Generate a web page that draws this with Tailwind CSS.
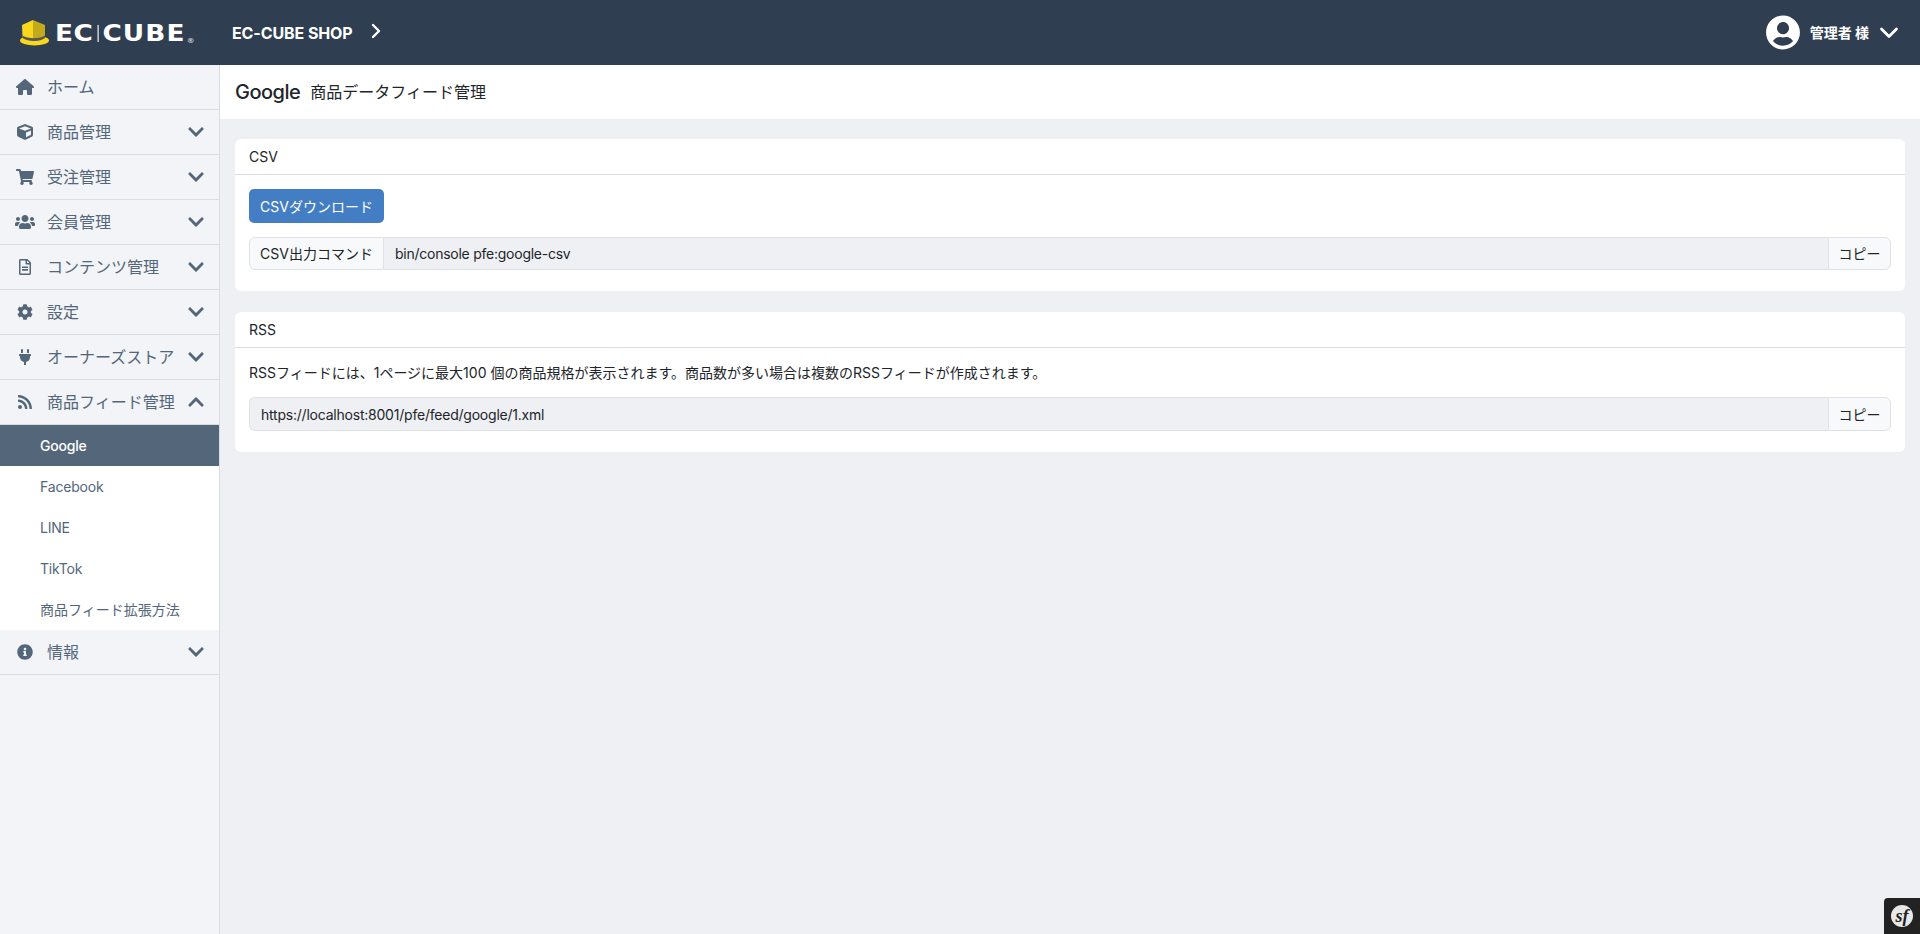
<!DOCTYPE html>
<html lang="ja">
<head>
<meta charset="utf-8">
<title>EC-CUBE</title>
<script src="https://cdn.jsdelivr.net/npm/@tailwindcss/browser@4"></script>
</head>
<body class="h-[934px] overflow-hidden bg-[#eff0f4] font-['Inter','Noto_Sans_CJK_JP',sans-serif] text-[14px] text-[#212529]">
<header class="flex h-[65px] items-center bg-[#2f3e51] text-white">
  <div class="flex w-[232px] shrink-0 items-center pl-[20px]">
    <svg class="mt-[1px] h-[26px] w-[30px] shrink-0" viewBox="0 0 30 26">
      <ellipse cx="14.5" cy="20.5" rx="14.5" ry="5" fill="#f9d71c"/>
      <path d="M2 5 L13 0 L13 21 C8 21 4 20 2.500 17 Z" fill="#f9d71c"/>
      <path d="M13 0 L25 5 L25 17 C23 20 18 21 13 21 Z" fill="#c3a91c"/>
      <path d="M2.500 15.500 C8 19 20 19 25 15.500 L25 18 C20 22 8 22 2.500 18 Z" fill="#56565a"/>
    </svg>
    <div class="mt-[2px] ml-[5px] flex origin-left scale-x-[1.12] items-center font-['DejaVu_Sans',sans-serif] text-[23.500px] leading-none font-bold tracking-[0.500px] whitespace-nowrap">
      <span>EC</span><span class="mx-[3.500px] h-[17px] w-px bg-white"></span><span class="tracking-[1px]">CUBE</span><span class="ml-[1px] self-end text-[7px] tracking-normal text-[#c9ccd1]">®</span>
    </div>
  </div>
  <span class="text-[16px] font-bold tracking-[-0.100px] whitespace-nowrap">EC-CUBE SHOP</span>
  <svg class="mt-[-3px] ml-[18px] h-[16px] w-[10px]" viewBox="0 0 10 16" fill="none" stroke="white" stroke-width="2.400" stroke-linecap="round" stroke-linejoin="round"><path d="M2 2 L8 8 L2 14"/></svg>
  <div class="ml-auto flex items-center pr-[21px]">
    <svg class="h-[35px] w-[34px] fill-white" viewBox="0 0 496 512"><path d="M248 8C111 8 0 119 0 256s111 248 248 248 248-111 248-248S385 8 248 8zm0 96c48.600 0 88 39.400 88 88s-39.400 88-88 88-88-39.400-88-88 39.400-88 88-88zm0 344c-58.700 0-111.300-26.600-146.500-68.200 18.800-35.400 55.600-59.800 98.500-59.800 2.400 0 4.800.4 7.100 1.100 13 4.200 26.600 6.900 40.900 6.900 14.300 0 28-2.700 40.900-6.900 2.300-.7 4.700-1.100 7.100-1.100 42.900 0 79.700 24.400 98.500 59.800C359.300 421.400 306.700 448 248 448z"/></svg>
    <span class="ml-[10px] text-[14px] font-bold whitespace-nowrap">管理者 様</span>
    <svg class="ml-[10px] h-[14px] w-[20px]" viewBox="0 0 20 14" fill="none" stroke="white" stroke-width="2.800" stroke-linecap="round" stroke-linejoin="round"><path d="M2.500 3 L10 10.500 L17.500 3"/></svg>
  </div>
</header>

<div class="flex h-[869px]">
  <nav class="w-[220px] shrink-0 border-r border-[#d9dce3] bg-[#f2f4f7] text-[16px] text-[#54677a]">
    <a class="flex h-[45px] items-center border-b border-[#d9dce3]">
      <span class="flex w-[47px] justify-center pl-[3px]"><svg class="h-[16px] w-[18px] fill-[#54677a]" viewBox="0 0 576 512"><path d="M575.800 255.500c0 18-15 32.100-32 32.100h-32l.7 160.200c0 2.700-.2 5.400-.5 8.100V472c0 22.100-17.900 40-40 40H456c-1.100 0-2.200 0-3.300-.1c-1.400 .1-2.800 .1-4.200 .1H416 392c-22.100 0-40-17.900-40-40V448 384c0-17.700-14.300-32-32-32H256c-17.700 0-32 14.300-32 32v64 24c0 22.100-17.900 40-40 40H160 128.100c-1.500 0-3-.1-4.500-.2c-1.200 .1-2.400 .2-3.600 .2H104c-22.100 0-40-17.900-40-40V360c0-.9 0-1.900 .1-2.800V287.600H32c-18 0-32-14-32-32.100c0-9 3-17 10-24L266.400 8c7-7 15-8 22-8s15 2 21 7L564.800 231.500c8 7 12 15 11 24z"/></svg></span>
      <span>ホーム</span>
    </a>
    <a class="flex h-[45px] items-center border-b border-[#d9dce3]">
      <span class="flex w-[47px] justify-center pl-[3px]"><svg class="h-[16px] w-[16px] fill-[#54677a]" viewBox="0 0 512 512"><path d="M239.100 6.300l-208 78c-18.700 7-31.100 25-31.100 45v225.100c0 18.200 10.300 34.800 26.500 42.900l208 104c13.500 6.800 29.400 6.800 42.900 0l208-104c16.300-8.100 26.500-24.800 26.500-42.900V129.300c0-20-12.400-37.900-31.100-44.900l-208-78C262 2.200 250 2.200 239.100 6.300zM256 68.400l192 72v1.100l-192 78-192-78v-1.100l192-72zm32 356V275.500l160-65v133.900l-160 80z"/></svg></span>
      <span>商品管理</span>
      <svg class="mr-[15px] ml-auto h-[18px] w-[16px] fill-[#54677a]" viewBox="0 0 448 512"><path d="M207.029 381.476L12.686 187.132c-9.373-9.373-9.373-24.569 0-33.941l22.667-22.667c9.357-9.357 24.522-9.375 33.901-.04L224 284.505l154.745-154.021c9.379-9.335 24.544-9.317 33.901.04l22.667 22.667c9.373 9.373 9.373 24.569 0 33.941L240.971 381.476c-9.373 9.372-24.569 9.372-33.942 0z"/></svg>
    </a>
    <a class="flex h-[45px] items-center border-b border-[#d9dce3]">
      <span class="flex w-[47px] justify-center pl-[3px]"><svg class="h-[16px] w-[18px] fill-[#54677a]" viewBox="0 0 576 512"><path d="M528.120 301.319l47.273-208C578.806 78.301 567.391 64 551.990 64H159.208l-9.166-44.810C147.758 8.021 137.930 0 126.529 0H24C10.745 0 0 10.745 0 24v16c0 13.255 10.745 24 24 24h69.883l70.248 343.435C147.325 417.100 136 435.222 136 456c0 30.928 25.072 56 56 56s56-25.072 56-56c0-15.674-6.447-29.835-16.824-40h209.647C430.447 426.165 424 440.326 424 456c0 30.928 25.072 56 56 56s56-25.072 56-56c0-22.172-12.888-41.332-31.579-50.405l5.517-24.276c3.413-15.018-8.002-29.319-23.403-29.319H218.117l-6.545-32h293.145c11.206 0 20.920-7.754 23.403-18.681z"/></svg></span>
      <span>受注管理</span>
      <svg class="mr-[15px] ml-auto h-[18px] w-[16px] fill-[#54677a]" viewBox="0 0 448 512"><path d="M207.029 381.476L12.686 187.132c-9.373-9.373-9.373-24.569 0-33.941l22.667-22.667c9.357-9.357 24.522-9.375 33.901-.04L224 284.505l154.745-154.021c9.379-9.335 24.544-9.317 33.901.04l22.667 22.667c9.373 9.373 9.373 24.569 0 33.941L240.971 381.476c-9.373 9.372-24.569 9.372-33.942 0z"/></svg>
    </a>
    <a class="flex h-[45px] items-center border-b border-[#d9dce3]">
      <span class="flex w-[47px] justify-center pl-[3px]"><svg class="h-[16px] w-[20px] fill-[#54677a]" viewBox="0 0 640 512"><path d="M96 224c35.300 0 64-28.700 64-64s-28.700-64-64-64-64 28.700-64 64 28.700 64 64 64zm448 0c35.300 0 64-28.700 64-64s-28.700-64-64-64-64 28.700-64 64 28.700 64 64 64zm32 32h-64c-17.600 0-33.500 7.100-45.100 18.600 40.300 22.100 68.900 62 75.100 109.400h66c17.700 0 32-14.300 32-32v-32c0-35.300-28.700-64-64-64zm-256 0c61.900 0 112-50.100 112-112S381.900 32 320 32 208 82.100 208 144s50.100 112 112 112zm76.800 32h-8.300c-20.800 10-43.900 16-68.500 16s-47.600-6-68.500-16h-8.300C179.600 288 128 339.600 128 403.200V432c0 26.500 21.500 48 48 48h288c26.500 0 48-21.500 48-48v-28.800c0-63.600-51.600-115.200-115.200-115.200zm-223.700-13.400C161.500 263.100 145.600 256 128 256H64c-35.300 0-64 28.700-64 64v32c0 17.700 14.300 32 32 32h65.900c6.300-47.400 34.900-87.300 75.200-109.400z"/></svg></span>
      <span>会員管理</span>
      <svg class="mr-[15px] ml-auto h-[18px] w-[16px] fill-[#54677a]" viewBox="0 0 448 512"><path d="M207.029 381.476L12.686 187.132c-9.373-9.373-9.373-24.569 0-33.941l22.667-22.667c9.357-9.357 24.522-9.375 33.901-.04L224 284.505l154.745-154.021c9.379-9.335 24.544-9.317 33.901.04l22.667 22.667c9.373 9.373 9.373 24.569 0 33.941L240.971 381.476c-9.373 9.372-24.569 9.372-33.942 0z"/></svg>
    </a>
    <a class="flex h-[45px] items-center border-b border-[#d9dce3]">
      <span class="flex w-[47px] justify-center pl-[3px]"><svg class="h-[16px] w-[12px] fill-[#54677a]" viewBox="0 0 384 512"><path d="M288 248v28c0 6.600-5.400 12-12 12H108c-6.600 0-12-5.400-12-12v-28c0-6.600 5.400-12 12-12h168c6.600 0 12 5.400 12 12zm-12 72H108c-6.600 0-12 5.400-12 12v28c0 6.600 5.400 12 12 12h168c6.600 0 12-5.400 12-12v-28c0-6.600-5.400-12-12-12zm108-188.100V464c0 26.500-21.500 48-48 48H48c-26.500 0-48-21.500-48-48V48C0 21.500 21.500 0 48 0h204.100C264.800 0 277 5.100 286 14.100L369.900 98c9 8.900 14.100 21.200 14.100 33.900zm-128-80V128h76.100L256 51.900zM336 464V176H232c-13.300 0-24-10.700-24-24V48H48v416h288z"/></svg></span>
      <span>コンテンツ管理</span>
      <svg class="mr-[15px] ml-auto h-[18px] w-[16px] fill-[#54677a]" viewBox="0 0 448 512"><path d="M207.029 381.476L12.686 187.132c-9.373-9.373-9.373-24.569 0-33.941l22.667-22.667c9.357-9.357 24.522-9.375 33.901-.04L224 284.505l154.745-154.021c9.379-9.335 24.544-9.317 33.901.04l22.667 22.667c9.373 9.373 9.373 24.569 0 33.941L240.971 381.476c-9.373 9.372-24.569 9.372-33.942 0z"/></svg>
    </a>
    <a class="flex h-[45px] items-center border-b border-[#d9dce3]">
      <span class="flex w-[47px] justify-center pl-[3px]"><svg class="h-[16px] w-[16px] fill-[#54677a]" viewBox="0 0 512 512"><path d="M487.400 315.700l-42.600-24.600c4.300-23.200 4.300-47 0-70.200l42.600-24.600c4.900-2.800 7.100-8.600 5.500-14-11.100-35.600-30-67.800-54.700-94.600-3.800-4.100-10-5.100-14.800-2.300L380.800 110c-17.900-15.400-38.500-27.300-60.800-35.100V25.800c0-5.600-3.900-10.500-9.400-11.700-36.700-8.200-74.300-7.800-109.200 0-5.500 1.200-9.400 6.100-9.400 11.700V75c-22.200 7.900-42.800 19.800-60.800 35.100L88.700 85.500c-4.900-2.800-11-1.900-14.800 2.300-24.700 26.700-43.600 58.900-54.700 94.600-1.700 5.400.6 11.200 5.500 14L67.300 221c-4.300 23.200-4.300 47 0 70.200l-42.600 24.600c-4.900 2.800-7.100 8.600-5.500 14 11.100 35.600 30 67.800 54.700 94.600 3.800 4.100 10 5.100 14.800 2.300l42.600-24.600c17.900 15.400 38.500 27.300 60.800 35.100v49.200c0 5.600 3.900 10.500 9.400 11.700 36.700 8.200 74.300 7.800 109.200 0 5.500-1.200 9.400-6.100 9.400-11.700v-49.200c22.200-7.900 42.800-19.800 60.800-35.100l42.600 24.600c4.900 2.800 11 1.900 14.800-2.300 24.700-26.700 43.600-58.900 54.700-94.600 1.500-5.500-.7-11.300-5.600-14.100zM256 336c-44.100 0-80-35.900-80-80s35.900-80 80-80 80 35.900 80 80-35.900 80-80 80z"/></svg></span>
      <span>設定</span>
      <svg class="mr-[15px] ml-auto h-[18px] w-[16px] fill-[#54677a]" viewBox="0 0 448 512"><path d="M207.029 381.476L12.686 187.132c-9.373-9.373-9.373-24.569 0-33.941l22.667-22.667c9.357-9.357 24.522-9.375 33.901-.04L224 284.505l154.745-154.021c9.379-9.335 24.544-9.317 33.901.04l22.667 22.667c9.373 9.373 9.373 24.569 0 33.941L240.971 381.476c-9.373 9.372-24.569 9.372-33.942 0z"/></svg>
    </a>
    <a class="flex h-[45px] items-center border-b border-[#d9dce3]">
      <span class="flex w-[47px] justify-center pl-[3px]"><svg class="h-[16px] w-[12px] fill-[#54677a]" viewBox="0 0 384 512"><path d="M320 32a32 32 0 0 0-64 0v96h64Zm48 128H16A16 16 0 0 0 0 176v32a16 16 0 0 0 16 16H32v32A160.070 160.070 0 0 0 160 412.800V512h64V412.800A160.070 160.070 0 0 0 352 256V224h16a16 16 0 0 0 16-16V176A16 16 0 0 0 368 160ZM128 32a32 32 0 0 0-64 0v96h64Z"/></svg></span>
      <span>オーナーズストア</span>
      <svg class="mr-[15px] ml-auto h-[18px] w-[16px] fill-[#54677a]" viewBox="0 0 448 512"><path d="M207.029 381.476L12.686 187.132c-9.373-9.373-9.373-24.569 0-33.941l22.667-22.667c9.357-9.357 24.522-9.375 33.901-.04L224 284.505l154.745-154.021c9.379-9.335 24.544-9.317 33.901.04l22.667 22.667c9.373 9.373 9.373 24.569 0 33.941L240.971 381.476c-9.373 9.372-24.569 9.372-33.942 0z"/></svg>
    </a>
    <a class="flex h-[45px] items-center border-b border-[#d9dce3]">
      <span class="flex w-[47px] justify-center pl-[3px]"><svg class="h-[16px] w-[14px] fill-[#54677a]" viewBox="0 0 448 512"><path d="M128.081 415.959c0 35.369-28.672 64.041-64.041 64.041S0 451.328 0 415.959s28.672-64.041 64.041-64.041 64.040 28.673 64.040 64.041zm175.660 47.250c-8.354-154.600-132.185-278.587-286.950-286.950C7.656 175.765 0 183.105 0 192.253v48.069c0 8.415 6.490 15.472 14.887 16.018 111.832 7.284 201.473 96.702 208.772 208.772.547 8.397 7.604 14.887 16.018 14.887h48.069c9.149.001 16.489-7.655 15.995-16.790zm144.249.288C439.596 229.677 251.465 40.445 16.503 32.010 7.473 31.686 0 38.981 0 48.016v48.068c0 8.625 6.835 15.645 15.453 15.999 191.179 7.839 344.627 161.316 352.465 352.465.353 8.618 7.373 15.453 15.999 15.453h48.068c9.034-.001 16.329-7.474 16.005-16.504z"/></svg></span>
      <span>商品フィード管理</span>
      <svg class="mr-[15px] ml-auto h-[18px] w-[16px] fill-[#54677a]" viewBox="0 0 448 512"><path d="M240.971 130.524l194.343 194.343c9.373 9.373 9.373 24.569 0 33.941l-22.667 22.667c-9.357 9.357-24.522 9.375-33.901.04L224 227.495 69.255 381.516c-9.379 9.335-24.544 9.317-33.901-.04l-22.667-22.667c-9.373-9.373-9.373-24.569 0-33.941L207.030 130.525c9.372-9.373 24.568-9.373 33.941-.001z"/></svg>
    </a>
    <ul class="bg-white text-[14px]">
      <li class="flex h-[41px] items-center bg-[#54677a] pl-[40px] font-medium tracking-[-0.200px] text-white">Google</li>
      <li class="flex h-[41px] items-center pl-[40px] tracking-[-0.200px]">Facebook</li>
      <li class="flex h-[41px] items-center pl-[40px] tracking-[-0.200px]">LINE</li>
      <li class="flex h-[41px] items-center pl-[40px] tracking-[-0.200px]">TikTok</li>
      <li class="flex h-[41px] items-center pl-[40px]">商品フィード拡張方法</li>
    </ul>
    <a class="flex h-[45px] items-center border-b border-[#d9dce3]">
      <span class="flex w-[47px] justify-center pl-[3px]"><svg class="h-[16px] w-[16px] fill-[#54677a]" viewBox="0 0 512 512"><path d="M256 8C119.043 8 8 119.083 8 256c0 136.997 111.043 248 248 248s248-111.003 248-248C504 119.083 392.957 8 256 8zm0 110c23.196 0 42 18.804 42 42s-18.804 42-42 42-42-18.804-42-42 18.804-42 42-42zm56 254c0 6.627-5.373 12-12 12h-88c-6.627 0-12-5.373-12-12v-24c0-6.627 5.373-12 12-12h12v-64h-12c-6.627 0-12-5.373-12-12v-24c0-6.627 5.373-12 12-12h64c6.627 0 12 5.373 12 12v100h12c6.627 0 12 5.373 12 12v24z"/></svg></span>
      <span>情報</span>
      <svg class="mr-[15px] ml-auto h-[18px] w-[16px] fill-[#54677a]" viewBox="0 0 448 512"><path d="M207.029 381.476L12.686 187.132c-9.373-9.373-9.373-24.569 0-33.941l22.667-22.667c9.357-9.357 24.522-9.375 33.901-.04L224 284.505l154.745-154.021c9.379-9.335 24.544-9.317 33.901.04l22.667 22.667c9.373 9.373 9.373 24.569 0 33.941L240.971 381.476c-9.373 9.372-24.569 9.372-33.942 0z"/></svg>
    </a>
  </nav>

  <main class="min-w-0 flex-1">
    <div class="flex h-[54px] items-center gap-[10px] bg-white pl-[15px]">
      <h1 class="text-[20px] font-medium tracking-[-0.500px]">Google</h1>
      <span class="text-[16px]">商品データフィード管理</span>
    </div>
    <div class="flex flex-col gap-[21px] px-[15px] pt-[20px]">
      <section class="h-[152px] rounded-[6px] bg-white">
        <div class="flex h-[36px] items-center border-b border-[#dcdde0] px-[14px]">CSV</div>
        <div class="px-[14px] pt-[14px]">
          <button class="flex h-[34px] w-[135px] items-center justify-center rounded-[5px] bg-[#437ec4] text-white">CSVダウンロード</button>
          <div class="mt-[14px] flex h-[33px]">
            <span class="flex w-[135px] items-center justify-center rounded-l-[6px] border border-[#dee2e6] bg-[#f8f9fa]">CSV出力コマンド</span>
            <span class="flex flex-1 items-center border-y border-[#dee2e6] bg-[#eff0f4] pl-[11px] tracking-[-0.250px]">bin/console pfe:google-csv</span>
            <button class="flex w-[63px] items-center justify-center rounded-r-[6px] border border-[#dee2e6] bg-[#f8f9fa]">コピー</button>
          </div>
        </div>
      </section>
      <section class="h-[140px] rounded-[6px] bg-white">
        <div class="flex h-[36px] items-center border-b border-[#dcdde0] px-[14px]">RSS</div>
        <div class="px-[14px] pt-[14px]">
          <p class="leading-[21px]">RSSフィードには、1ページに最大100 個の商品規格が表示されます。商品数が多い場合は複数のRSSフィードが作成されます。</p>
          <div class="mt-[14px] flex h-[34px]">
            <span class="flex flex-1 items-center rounded-l-[6px] border border-r-0 border-[#dee2e6] bg-[#eff0f4] pl-[11px] tracking-[-0.220px]">https://localhost:8001/pfe/feed/google/1.xml</span>
            <button class="flex w-[63px] items-center justify-center rounded-r-[6px] border border-[#dee2e6] bg-[#f8f9fa]">コピー</button>
          </div>
        </div>
      </section>
    </div>
  </main>
</div>

<div class="absolute right-0 bottom-0 flex h-[36px] w-[36px] items-center justify-center rounded-tl-[4px] bg-[#222222]">
  <span class="flex h-[22px] w-[22px] items-center justify-center rounded-full bg-[#e8e8e8] font-['Liberation_Serif',serif] text-[18px] leading-none font-bold text-[#222222] italic">sf</span>
</div>
</body>
</html>
